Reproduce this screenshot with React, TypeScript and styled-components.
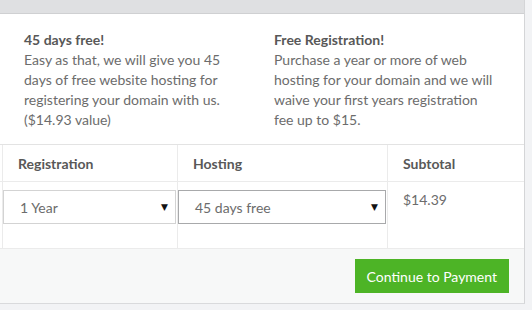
import React from "react";
import styled, { createGlobalStyle } from "styled-components";

const Global = createGlobalStyle`
  html, body { margin: 0; padding: 0; background: #f2f3f5; }
  body { font-family: Lato, "Noto Sans", sans-serif; font-size: 14px; color: #6c6c6c; }
  * { box-sizing: border-box; }
`;

const Panel = styled.div`
  width: 525px;
  background: #fff;
  border-right: 1px solid #d4d5d7;
  border-bottom: 1px solid #d9dadc;
`;

const PanelTop = styled.div`
  height: 14px;
  background: #dfe0e2;
  border-bottom: 1px solid #cfd0d2;
`;

const Info = styled.div`
  display: grid;
  grid-template-columns: 250px 1fr;
  padding: 16px 0 14px;
  border-bottom: 1px solid #e3e3e3;
`;

const InfoCol = styled.div`
  padding-left: 24px;
  line-height: 20px;
`;

const InfoTitle = styled.div`
  font-weight: 700;
  color: #585858;
`;

const Table = styled.div`
  display: grid;
  grid-template-columns: 2px 175px 210px 1fr;
`;

const Cell = styled.div<{ $head?: boolean; $edge?: boolean }>`
  border-left: ${(p) => (p.$edge ? "0" : "1px solid #ebebeb")};
  border-bottom: ${(p) => (p.$head ? "1px solid #ebebeb" : "0")};
  height: ${(p) => (p.$head ? "37px" : "66px")};
  padding: ${(p) => (p.$head && !p.$edge ? "0 0 0 15px" : p.$head ? "0" : "8px 0 0 0")};
  display: ${(p) => (p.$head ? "flex" : "block")};
  align-items: center;
  font-weight: ${(p) => (p.$head ? 700 : 400)};
  color: ${(p) => (p.$head ? "#585858" : "#6c6c6c")};
`;

const Subtotal = styled.div`
  padding-left: 15px;
  line-height: 20px;
`;

const SelectBox = styled.div<{ $focus?: boolean }>`
  height: 34px;
  margin-right: 1px;
  border: 1px solid ${(p) => (p.$focus ? "#a8a9ab" : "#d3d3d3")};
  display: flex;
  align-items: center;
  justify-content: space-between;
  padding: 0 7px 0 16px;
  color: #6c6c6c;
  background: #fff;
`;

const Arrow = styled.span`
  font-size: 9px;
  color: #111;
  font-family: "DejaVu Sans", sans-serif;
`;

const Footer = styled.div`
  background: #f7f8f8;
  border-top: 1px solid #ebebeb;
  padding: 10px 15px 10px 0;
  display: flex;
  justify-content: flex-end;
`;

const Button = styled.button`
  height: 34px;
  padding: 0 12px;
  border: 0;
  background: #4db426;
  color: #fff;
  font-family: inherit;
  font-size: 14px;
  cursor: pointer;
`;

export default function App() {
  return (
    <>
      <Global />
      <Panel>
        <PanelTop />
        <Info>
          <InfoCol>
            <InfoTitle>45 days free!</InfoTitle>
            Easy as that, we will give you 45
            <br />
            days of free website hosting for
            <br />
            registering your domain with us.
            <br />
            ($14.93 value)
          </InfoCol>
          <InfoCol>
            <InfoTitle>Free Registration!</InfoTitle>
            Purchase a year or more of web
            <br />
            hosting for your domain and we will
            <br />
            waive your first years registration
            <br />
            fee up to $15.
          </InfoCol>
        </Info>
        <Table>
          <Cell $head $edge />
          <Cell $head>Registration</Cell>
          <Cell $head>Hosting</Cell>
          <Cell $head>Subtotal</Cell>
          <Cell $edge />
          <Cell>
            <SelectBox>
              <span>1 Year</span>
              <Arrow>▼</Arrow>
            </SelectBox>
          </Cell>
          <Cell>
            <SelectBox $focus>
              <span>45 days free</span>
              <Arrow>▼</Arrow>
            </SelectBox>
          </Cell>
          <Cell>
            <Subtotal>$14.39</Subtotal>
          </Cell>
        </Table>
        <Footer>
          <Button>Continue to Payment</Button>
        </Footer>
      </Panel>
    </>
  );
}
